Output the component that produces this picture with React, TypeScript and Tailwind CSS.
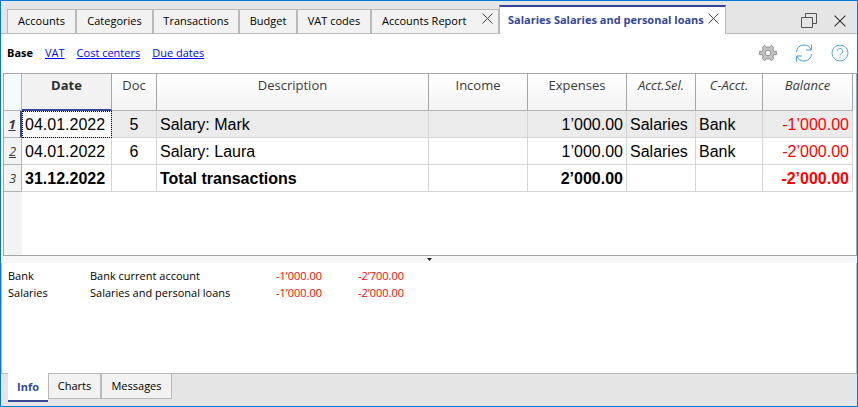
import React from "react";

const documentTabs = [
  { label: "Accounts", width: "w-[69px]" },
  { label: "Categories", width: "w-[77px]" },
  { label: "Transactions", width: "w-[86px]" },
  { label: "Budget", width: "w-[58px]" },
  { label: "VAT codes", width: "w-[74px]" },
];

const columns = [
  { label: "Date", style: "w-[90px] border-b-2 border-b-[#334797] bg-[#f2f2f2] font-bold text-[#2f2f33]" },
  { label: "Doc", style: "w-[45px] border-b border-b-[#b4b4b4] font-normal" },
  { label: "Description", style: "border-b border-b-[#b4b4b4] font-normal" },
  { label: "Income", style: "w-[99px] border-b border-b-[#b4b4b4] font-normal" },
  { label: "Expenses", style: "w-[99px] border-b border-b-[#b4b4b4] font-normal" },
  { label: "Acct.Sel.", style: "w-[69px] border-b border-b-[#b4b4b4] font-normal italic" },
  { label: "C-Acct.", style: "w-[67px] border-b border-b-[#b4b4b4] font-normal italic" },
  { label: "Balance", style: "w-[90px] border-b border-b-[#b4b4b4] font-normal italic" },
];

const rows = [
  { id: 1, date: "04.01.2022", doc: "5", text: "Salary: Mark", expenses: "1’000.00", sel: "Salaries", contra: "Bank", balance: "-1’000.00" },
  { id: 2, date: "04.01.2022", doc: "6", text: "Salary: Laura", expenses: "1’000.00", sel: "Salaries", contra: "Bank", balance: "-2’000.00" },
  { id: 3, date: "31.12.2022", doc: "", text: "Total transactions", expenses: "2’000.00", sel: "", contra: "", balance: "-2’000.00" },
];

const rowHeaderStyles: Record<number, string> = {
  1: "border-r-2 border-r-[#334797] font-bold underline",
  2: "border-r border-r-[#b4b4b4] font-normal underline",
  3: "border-r border-r-[#b4b4b4] font-normal",
};

const infoRows = [
  { account: "Bank", text: "Bank current account", amount: "-1’000.00", balance: "-2’700.00" },
  { account: "Salaries", text: "Salaries and personal loans", amount: "-1’000.00", balance: "-2’000.00" },
];

function Cross({ size, color }: { size: number; color: string }) {
  return (
    <svg width={size} height={size} viewBox="0 0 11 11" fill="none" stroke={color} aria-hidden="true">
      <path d="M.5.5l10 10M10.5.5l-10 10" />
    </svg>
  );
}

function Gear() {
  return (
    <svg width="18" height="18" viewBox="0 0 18 18" aria-hidden="true">
      <path
        fillRule="evenodd"
        fill="#c4c4c4"
        stroke="#858585"
        strokeWidth=".9"
        d="M.6 7.300h2.600l.9-1.600L3.500 3.300l2-2 2 1.800h3L12.500 1.300l2 2-.6 2.400.9 1.600h2.600v3.400h-2.600l-.9 1.600.6 2.400-2 2-2-1.800h-3L5.500 16.700l-2-2 .6-2.400-.9-1.600H.6zM9 6.200a2.800 2.800 0 1 0 0 5.600 2.800 2.800 0 0 0 0-5.600z"
      />
    </svg>
  );
}

function Refresh() {
  return (
    <svg width="18" height="18" viewBox="0 0 18 18" fill="none" stroke="#4a9fd8" strokeWidth="1" aria-hidden="true">
      <path d="M1.500 8A7.600 7.600 0 0 1 16.200 6M16.500.5v5.500H11M16.500 10A7.600 7.600 0 0 1 1.800 12M1.500 17.500V12H7" />
    </svg>
  );
}

function Help() {
  return (
    <svg width="18" height="18" viewBox="0 0 18 18" fill="none" stroke="#5aa9dc" strokeWidth="1" aria-hidden="true">
      <circle cx="9" cy="9" r="8" />
      <path d="M6.300 7.200a2.700 2.700 0 1 1 4.400 2.100C9.700 10 9 10.300 9 11.500M9 12.800v1.400" />
    </svg>
  );
}

function Restore() {
  return (
    <svg width="16" height="16" viewBox="0 0 16 16" fill="none" stroke="#555" aria-hidden="true">
      <path d="M.5 4.500h11v10H.5zM4.500 4.500v-4h11v10h-4" />
    </svg>
  );
}

export default function App() {
  return (
    <div className="flex min-h-screen flex-col border border-[#0078d7] bg-white font-['Open_Sans',sans-serif] text-[11px] leading-4 text-black">
      <header className="flex h-[33px] shrink-0 bg-[#e5e5e5]">
        <div className="w-[6px] shrink-0 border-b border-[#b9b9b9]" />
        <nav className="flex items-end whitespace-nowrap">
          {documentTabs.map((tab) => (
            <button
              key={tab.label}
              className={`${tab.width} h-[25px] border border-[#b9b9b9] bg-[#f2f2f2] pb-[2px] text-center`}
            >
              {tab.label}
            </button>
          ))}
          <div className="flex h-[25px] w-[128px] justify-between border border-[#b9b9b9] bg-[#f2f2f2] pr-[5px] pl-[10px]">
            <button className="pb-[2px]">Accounts Report</button>
            <button aria-label="Close Accounts Report" className="self-start pt-[3px]">
              <Cross size={11} color="#444" />
            </button>
          </div>
          <div className="flex h-[29px] w-[227px] justify-between border-x border-t-2 border-x-[#b9b9b9] border-t-[#334797] bg-white pr-[6px] pl-[8px]">
            <button className="pb-[2px] font-bold text-[#334797]">Salaries Salaries and personal loans</button>
            <button aria-label="Close Salaries" className="self-start pt-[6px]">
              <Cross size={11} color="#444" />
            </button>
          </div>
        </nav>
        <div className="flex flex-1 items-center justify-end gap-[17px] border-b border-[#b9b9b9] pt-[8px] pr-[11px]">
          <button aria-label="Restore window">
            <Restore />
          </button>
          <button aria-label="Close window">
            <Cross size={12} color="#333" />
          </button>
        </div>
      </header>

      <div className="flex h-[39px] shrink-0 items-center gap-[12px] pr-[8px] pb-px pl-[6px]">
        <strong>Base</strong>
        <a href="#vat" className="text-[#0000ff] underline">VAT</a>
        <a href="#cost-centers" className="text-[#0000ff] underline">Cost centers</a>
        <a href="#due-dates" className="text-[#0000ff] underline">Due dates</a>
        <div className="ml-auto flex items-center gap-[18px]">
          <button aria-label="Settings"><Gear /></button>
          <button aria-label="Refresh"><Refresh /></button>
          <button aria-label="Help"><Help /></button>
        </div>
      </div>

      <main className="ml-[2px] flex flex-col border border-[#a6a6a6]">
        <div className="bg-[linear-gradient(#fff,#f3f3f3)] bg-[length:100%_36px] bg-no-repeat pr-[3px]">
          <table className="w-full table-fixed border-separate border-spacing-0 font-['Liberation_Sans',Arial,sans-serif] text-[16px] leading-[24px]">
            <thead>
              <tr className="h-[37px] font-['Open_Sans',sans-serif] text-[13px] leading-4 text-[#3a3a3e]">
                <th aria-label="Row" className="w-[18px] border-r border-b border-[#b4b4b4] bg-[#f3fcfd]" />
                {columns.map((column) => (
                  <th
                    key={column.label}
                    className={`border-r border-r-[#a6a6a6] p-0 pt-[3px] text-center align-top ${column.style}`}
                  >
                    {column.label}
                  </th>
                ))}
              </tr>
            </thead>
            <tbody className="[&_td]:h-[27px] [&_td]:border-r [&_td]:border-b [&_td]:border-[#d4d4d4] [&_td]:p-0 [&_td]:pt-[2px]">
              {rows.map((row) => (
                <tr key={row.id} className={row.id === 1 ? "bg-[#ebebeb]" : row.id === 3 ? "bg-white font-bold" : "bg-white"}>
                  <th
                    scope="row"
                    className={`border-b border-b-[#b4b4b4] bg-[#f3f3f3] p-0 text-center font-['Open_Sans',sans-serif] text-[13px] text-[#3a3a3e] italic ${rowHeaderStyles[row.id]}`}
                  >
                    {row.id}
                  </th>
                  <td className={row.id === 1 ? "bg-white outline-1 -outline-offset-1 outline-black outline-dotted" : ""}>
                    <span className="pl-[3px]">{row.date}</span>
                  </td>
                  <td className="text-center">{row.doc}</td>
                  <td><span className="pl-[3px]">{row.text}</span></td>
                  <td />
                  <td className="text-right"><span className="pr-[3px]">{row.expenses}</span></td>
                  <td><span className="pl-[3px]">{row.sel}</span></td>
                  <td><span className="pl-[3px]">{row.contra}</span></td>
                  <td className="text-right text-[#ff0000]"><span className="pr-[3px]">{row.balance}</span></td>
                </tr>
              ))}
            </tbody>
          </table>
        </div>
        <div className="h-[63px] border-l-[18px] border-[#f3f3f3]" />
      </main>

      <div className="flex h-[7px] shrink-0 justify-center bg-[#f7f7f7] pt-[2px]">
        <svg width="5" height="3" viewBox="0 0 5 3" aria-hidden="true">
          <path d="M0 0h5L2.500 3z" fill="#222" />
        </svg>
      </div>

      <section className="flex-1 border-x border-b border-[#b9b9b9] pt-[4px] pl-[6px]">
        <table className="table-fixed leading-[17px]">
          <tbody>
            {infoRows.map((row) => (
              <tr key={row.account}>
                <td className="w-[82px] p-0">{row.account}</td>
                <td className="w-[150px] p-0 whitespace-nowrap">{row.text}</td>
                <td className="w-[82px] p-0 text-right text-[#ff0000]">{row.amount}</td>
                <td className="w-[82px] p-0 text-right text-[#ff0000]">{row.balance}</td>
              </tr>
            ))}
          </tbody>
        </table>
      </section>

      <footer className="flex h-[32px] shrink-0 items-start bg-[#e5e5e5] pl-[7px]">
        <button className="-mt-px h-[29px] w-[40px] border-b-2 border-[#334797] bg-white font-bold text-[#334797]">Info</button>
        <button className="h-[25px] w-[53px] border-x border-b border-[#b9b9b9] bg-[#f2f2f2]">Charts</button>
        <button className="h-[25px] w-[71px] border-x border-b border-[#b9b9b9] bg-[#f2f2f2]">Messages</button>
      </footer>
    </div>
  );
}
